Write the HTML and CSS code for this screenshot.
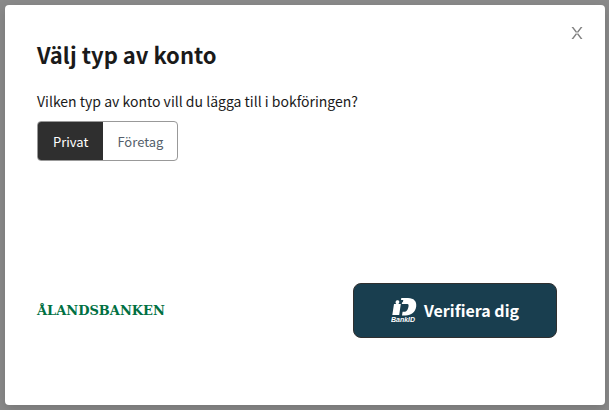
FILE: index.html
```
<!DOCTYPE html>
<html lang="sv">
<head>
    <meta charset="UTF-8">
    <meta name="viewport" content="width=device-width, initial-scale=1.0">
    <title>Välj typ av konto</title>
    <link rel="stylesheet" href="styles.css">
</head>
<body>
    <div class="modal" role="dialog" aria-labelledby="modal-title">
        <button class="close" type="button" aria-label="Stäng">
            <svg width="12" height="14" viewBox="0 0 12 14">
                <path d="M0.500 1H2.300L11.500 13H9.700ZM11.500 1H9.700L0.500 13H2.300Z"/>
            </svg>
        </button>

        <h2 id="modal-title">Välj typ av konto</h2>

        <fieldset class="account-type">
            <legend>Vilken typ av konto vill du lägga till i bokföringen?</legend>
            <div class="radio-group">
                <input type="radio" name="account" id="private" value="private" checked>
                <label for="private">Privat</label>
                <input type="radio" name="account" id="company" value="company">
                <label for="company">Företag</label>
            </div>
        </fieldset>

        <div class="actions">
            <span class="bank-name">ÅLANDSBANKEN</span>
            <button class="verify" type="button">
                <!-- BankID logo -->
                <svg class="bankid" width="26" height="26" viewBox="0 0 26 26">
                    <path d="M3 7H5.300C4.300 6 4.300 4.500 5.200 3.700C6.200 2.800 7.900 3.200 8.300 4.500C8.500 5.500 8.100 6.300 7.200 7H9.800L8.200 18H1.300Z"/>
                    <path d="M10.300 1H17C23 1 25.800 4.500 25.200 9.500C24.400 15 20.500 18.500 14.500 18.500H11L11.600 14.800H13C15.800 14.800 17 12.500 17.500 9.500C17.800 8 17.500 7 16.500 7H10.800L11.100 5.300H12.300C11.600 4.500 11.800 3.500 12.600 3.100H10Z"/>
                    <text x="0" y="25">BankID</text>
                </svg>
                <span>Verifiera dig</span>
            </button>
        </div>
    </div>
</body>
</html>
```
FILE: styles.css
```
* {
    box-sizing: border-box;
}
body {
    margin: 0;
    padding: 5px 4px 5px 5px;
    min-height: 100vh;
    display: flex;
    background-color: #8a8a8a;
    color: #1a1a1a;
    font-family: "Noto Sans CJK SC", "Open Sans", sans-serif;
    font-size: 14px;
}
button {
    font-family: inherit;
    border: none;
    cursor: pointer;
}
.modal {
    position: relative;
    flex: 1;
    display: flex;
    flex-direction: column;
    padding: 32px 48px 67px 32px;
    background-color: #fff;
    border-radius: 4px;
    box-shadow: 0 4px 12px rgba(0, 0, 0, 0.15);
}
.close {
    position: absolute;
    top: 16px;
    right: 16px;
    display: flex;
    justify-content: center;
    align-items: center;
    width: 24px;
    height: 24px;
    padding: 0;
    background: none;
    fill: #808080;
}
h2 {
    margin: 0 0 18px;
    font-size: 22px;
    line-height: 34px;
    font-weight: 700;
}
.account-type {
    margin: 0;
    padding: 0;
    border: none;
}
legend {
    padding: 0;
    line-height: 24px;
    margin-bottom: 8px;
}
.radio-group {
    display: inline-flex;
    border: 1px solid #999;
    border-radius: 4px;
    overflow: hidden;
}
.radio-group input {
    position: absolute;
    opacity: 0;
}
.radio-group label {
    padding: 1px 14px 0;
    font-size: 13px;
    line-height: 37px;
    color: #555f6b;
    cursor: pointer;
}
.radio-group input:checked + label {
    margin: -1px 0 -1px -1px;
    padding: 2px 15px 1px 16px;
    color: #fff;
    background-color: #2f2f2f;
}
.actions {
    display: flex;
    justify-content: space-between;
    align-items: center;
    margin-top: auto;
}
.bank-name {
    font-family: "DejaVu Serif", serif;
    font-size: 13px;
    font-weight: 700;
    color: #007042;
}
.verify {
    display: flex;
    justify-content: center;
    align-items: center;
    gap: 7px;
    width: 204px;
    height: 55px;
    padding: 0 0 2px;
    border: 1px solid #303030;
    border-radius: 8px;
    background-color: #193e4f;
    color: #fff;
    font-size: 16px;
    font-weight: 700;
}
.bankid {
    fill: #fff;
}
.bankid text {
    font-family: "Liberation Sans", sans-serif;
    font-size: 7px;
    font-weight: 700;
    font-style: italic;
}
```
